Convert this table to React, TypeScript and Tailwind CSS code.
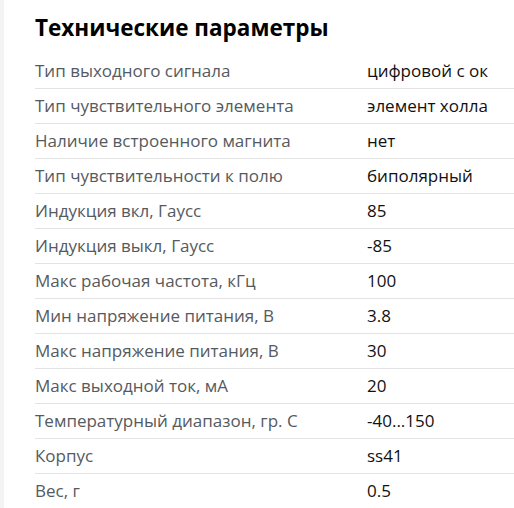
import React from "react";

const specs: [string, string][] = [
  ["Тип выходного сигнала", "цифровой с ок"],
  ["Тип чувствительного элемента", "элемент холла"],
  ["Наличие встроенного магнита", "нет"],
  ["Тип чувствительности к полю", "биполярный"],
  ["Индукция вкл, Гаусс", "85"],
  ["Индукция выкл, Гаусс", "-85"],
  ["Макс рабочая частота, кГц", "100"],
  ["Мин напряжение питания, В", "3.8"],
  ["Макс напряжение питания, В", "30"],
  ["Макс выходной ток, мА", "20"],
  ["Температурный диапазон, гр. С", "-40...150"],
  ["Корпус", "ss41"],
  ["Вес, г", "0.5"],
];

const App = () => {
  return (
    <div className="flex min-h-screen bg-white font-['Open_Sans',sans-serif]">
      {/* left edge strip */}
      <div className="w-[4px] shrink-0 bg-[#f3f4f6]"></div>

      <div className="flex-1 pl-[31px] pt-[12px] overflow-hidden">
        <h2 className="text-[22.5px] font-bold leading-[32px] text-black mb-[10px]">
          Технические параметры
        </h2>

        <div className="flex flex-col">
          {specs.map(([label, value], i) => (
            <div
              key={i}
              className="flex items-center h-[35px] border-b border-[#e3e3e3] text-[17px]"
            >
              <div className="w-[332px] shrink-0 text-[#555a60]">{label}</div>
              <div className="text-[#111]">{value}</div>
            </div>
          ))}
        </div>
      </div>
    </div>
  );
};

export default App;
